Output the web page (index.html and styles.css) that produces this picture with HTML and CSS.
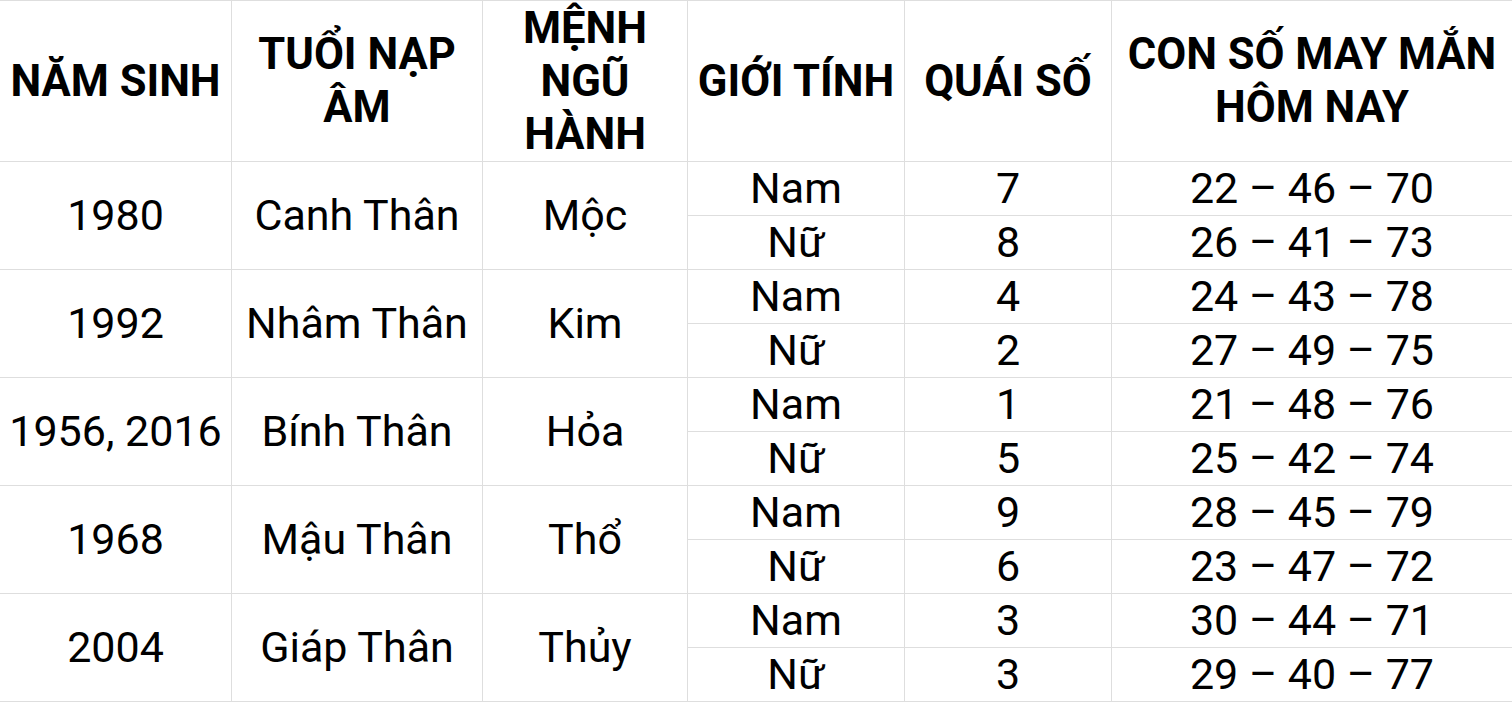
FILE: index.html
```html
<!DOCTYPE html>
<html lang="vi">
<head>
<meta charset="utf-8">
<title>Con số may mắn</title>
<link rel="stylesheet" href="styles.css">
</head>
<body>
<div class="grid">
  <div class="cell head">NĂM SINH</div>
  <div class="cell head">TUỔI NẠP<br>ÂM</div>
  <div class="cell head">MỆNH<br>NGŨ<br>HÀNH</div>
  <div class="cell head">GIỚI TÍNH</div>
  <div class="cell head">QUÁI SỐ</div>
  <div class="cell head">CON SỐ MAY MẮN<br>HÔM NAY</div>

  <div class="cell span">1980</div>
  <div class="cell span">Canh Thân</div>
  <div class="cell span">Mộc</div>
  <div class="cell">Nam</div><div class="cell">7</div><div class="cell">22 – 46 – 70</div>
  <div class="cell">Nữ</div><div class="cell">8</div><div class="cell">26 – 41 – 73</div>

  <div class="cell span">1992</div>
  <div class="cell span">Nhâm Thân</div>
  <div class="cell span">Kim</div>
  <div class="cell">Nam</div><div class="cell">4</div><div class="cell">24 – 43 – 78</div>
  <div class="cell">Nữ</div><div class="cell">2</div><div class="cell">27 – 49 – 75</div>

  <div class="cell span">1956, 2016</div>
  <div class="cell span">Bính Thân</div>
  <div class="cell span">Hỏa</div>
  <div class="cell">Nam</div><div class="cell">1</div><div class="cell">21 – 48 – 76</div>
  <div class="cell">Nữ</div><div class="cell">5</div><div class="cell">25 – 42 – 74</div>

  <div class="cell span">1968</div>
  <div class="cell span">Mậu Thân</div>
  <div class="cell span">Thổ</div>
  <div class="cell">Nam</div><div class="cell">9</div><div class="cell">28 – 45 – 79</div>
  <div class="cell">Nữ</div><div class="cell">6</div><div class="cell">23 – 47 – 72</div>

  <div class="cell span">2004</div>
  <div class="cell span">Giáp Thân</div>
  <div class="cell span">Thủy</div>
  <div class="cell">Nam</div><div class="cell">3</div><div class="cell">30 – 44 – 71</div>
  <div class="cell">Nữ</div><div class="cell">3</div><div class="cell">29 – 40 – 77</div>
</div>
</body>
</html>
```
FILE: styles.css
```css
html, body {
  margin: 0;
  padding: 0;
  background: #fff;
}
body {
  font-family: Roboto, "Liberation Sans", sans-serif;
  color: #000;
}
.grid {
  display: grid;
  grid-template-columns: 231px 250px 204px 216px 206px 400px;
  grid-template-rows: 160px repeat(10, 53px);
  gap: 1px;
  padding: 1px 0;
  background: #dedede;
  width: 1512px;
}
.cell {
  background: #fff;
  display: flex;
  align-items: center;
  justify-content: center;
  text-align: center;
  font-size: 43px;
  line-height: 53px;
  white-space: nowrap;
}
.head {
  font-weight: 700;
  font-size: 43.5px;
}
.span {
  grid-row: span 2;
}
```
